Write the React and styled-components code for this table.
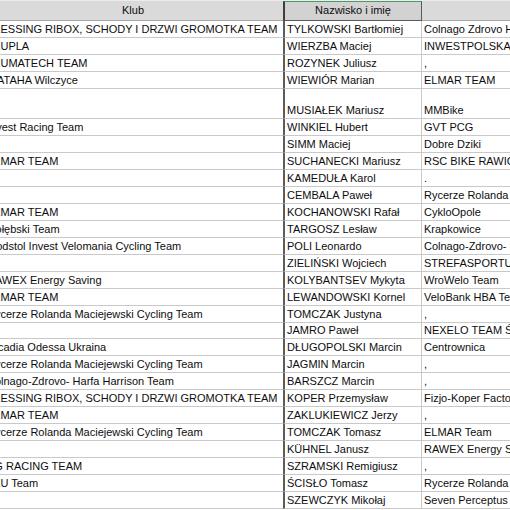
import styled, { createGlobalStyle } from "styled-components";

const GlobalStyle = createGlobalStyle`
  html, body {
    margin: 0;
    padding: 0;
    background: #ffffff;
    overflow: hidden;
  }
  body {
    font-family: "Liberation Sans", Arial, sans-serif;
  }
`;

const Sheet = styled.div`
  width: 640px;
  margin-left: -17px;
  font-size: 11px;
  color: #0d0d0d;
`;

const HeaderRow = styled.div`
  display: grid;
  grid-template-columns: 300px 139px 1fr;
  height: 21px;
  border-top: 1px solid #ececec;
  box-sizing: border-box;
`;

const HeadCell = styled.div`
  display: flex;
  align-items: flex-end;
  justify-content: center;
  padding-bottom: 3px;
  box-sizing: border-box;
  background: ${(p) => (p.$selected ? "#d2d2d2" : "#dadada")};
  border-bottom: 1px solid ${(p) => (p.$selected ? "#5a5a5a" : "#a9a9a9")};
  border-top: 1px solid ${(p) => (p.$selected ? "#4c9a66" : "#dadada")};
  border-left: ${(p) => (p.$selected ? "2px solid #3e3e3e" : "none")};
  border-right: ${(p) => (p.$selected ? "1px solid #5a5a5a" : "none")};
  line-height: 13px;
`;

const Row = styled.div`
  display: grid;
  grid-template-columns: 300px 139px 1fr;
  height: ${(p) => (p.$tall ? "30px" : "16.97px")};
`;

const Cell = styled.div`
  display: flex;
  align-items: flex-end;
  box-sizing: border-box;
  padding-left: ${(p) => (p.$kind === "club" ? "4px" : "2px")};
  padding-bottom: 1px;
  border-bottom: 1px solid #c9c9c9;
  line-height: 13px;
  white-space: nowrap;
  overflow: hidden;
  border-left: ${(p) => (p.$kind === "name" ? "2px solid #5c5c5c" : "none")};
  border-right: ${(p) => (p.$kind === "name" ? "1px solid #c9c9c9" : "none")};
`;

const rows = [
  { club: "BLESSING RIBOX, SCHODY I DRZWI GROMOTKA TEAM", name: "TYLKOWSKI Bartłomiej", team: "Colnago Zdrovo Harfa Harrison Team" },
  { club: "KLUPLA", name: "WIERZBA Maciej", team: "INWESTPOLSKA TEAM" },
  { club: "PLUMATECH TEAM", name: "ROZYNEK Juliusz", team: "," },
  { club: "WATAHA Wilczyce", name: "WIEWIÓR Marian", team: "ELMAR TEAM" },
  { club: "", name: "MUSIAŁEK Mariusz", team: "MMBike", tall: true },
  { club: "Invest Racing Team", name: "WINKIEL Hubert", team: "GVT PCG" },
  { club: "", name: "SIMM Maciej", team: "Dobre Dziki" },
  { club: "ELMAR TEAM", name: "SUCHANECKI Mariusz", team: "RSC BIKE RAWICZ" },
  { club: "", name: "KAMEDUŁA Karol", team: "." },
  { club: "", name: "CEMBALA Paweł", team: "Rycerze Rolanda Maciejewski Cycling Team" },
  { club: "ELMAR TEAM", name: "KOCHANOWSKI Rafał", team: "CykloOpole" },
  { club: "Gołębski Team", name: "TARGOSZ Lesław", team: "Krapkowice" },
  { club: "Modstol Invest Velomania Cycling Team", name: "POLI Leonardo", team: "Colnago-Zdrovo- Harfa Harrison Team" },
  { club: "", name: "ZIELIŃSKI Wojciech", team: "STREFASPORTU.PL" },
  { club: "RAWEX Energy Saving", name: "KOLYBANTSEV Mykyta", team: "WroWelo Team" },
  { club: "ELMAR TEAM", name: "LEWANDOWSKI Kornel", team: "VeloBank HBA Team" },
  { club: "Rycerze Rolanda Maciejewski Cycling Team", name: "TOMCZAK Justyna", team: "," },
  { club: "", name: "JAMRO Paweł", team: "NEXELO TEAM ŚWIDNICA" },
  { club: "Arcadia Odessa Ukraina", name: "DŁUGOPOLSKI Marcin", team: "Centrownica" },
  { club: "Rycerze Rolanda Maciejewski Cycling Team", name: "JAGMIN Marcin", team: "," },
  { club: "Colnago-Zdrovo- Harfa Harrison Team", name: "BARSZCZ Marcin", team: "," },
  { club: "BLESSING RIBOX, SCHODY I DRZWI GROMOTKA TEAM", name: "KOPER Przemysław", team: "Fizjo-Koper Factory" },
  { club: "ELMAR TEAM", name: "ZAKLUKIEWICZ Jerzy", team: "," },
  { club: "Rycerze Rolanda Maciejewski Cycling Team", name: "TOMCZAK Tomasz", team: "ELMAR Team" },
  { club: "", name: "KÜHNEL Janusz", team: "RAWEX Energy Saving" },
  { club: "KG RACING TEAM", name: "SZRAMSKI Remigiusz", team: "," },
  { club: "ALU Team", name: "ŚCISŁO Tomasz", team: "Rycerze Rolanda Maciejewski Cycling Team" },
  { club: "", name: "SZEWCZYK Mikołaj", team: "Seven Perceptus Team" },
];

export default function App() {
  return (
    <>
      <GlobalStyle />
      <Sheet>
        <HeaderRow>
          <HeadCell>Klub</HeadCell>
          <HeadCell $selected>Nazwisko i imię</HeadCell>
          <HeadCell />
        </HeaderRow>
        {rows.map((r, i) => (
          <Row key={i} $tall={r.tall}>
            <Cell $kind="club">{r.club}</Cell>
            <Cell $kind="name">{r.name}</Cell>
            <Cell $kind="team">{r.team}</Cell>
          </Row>
        ))}
      </Sheet>
    </>
  );
}
